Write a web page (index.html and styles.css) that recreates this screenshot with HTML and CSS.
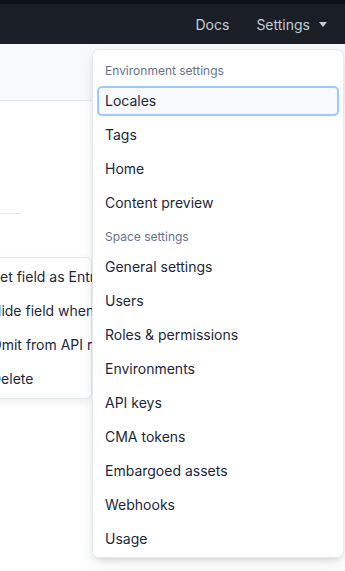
FILE: index.html
```html
<!DOCTYPE html>
<html lang="en">
<head>
  <meta charset="UTF-8">
  <meta name="viewport" content="width=device-width, initial-scale=1.0">
  <title>Settings</title>
  <link rel="stylesheet" href="styles.css">
</head>
<body>
  <div class="top-strip"></div>
  <header class="navbar">
    <nav class="nav-links">
      <a class="nav-link" href="#">Docs</a>
      <button class="nav-link nav-settings">
        Settings
        <svg class="caret" width="8" height="5" viewBox="0 0 8 5"><path d="M0 0h8L4 5z" fill="currentColor"/></svg>
      </button>
    </nav>
  </header>

  <main class="page">
    <div class="toolbar"></div>
    <div class="content">
      <div class="divider"></div>
    </div>

    <!-- field actions menu (behind the settings dropdown) -->
    <ul class="field-menu">
      <li>Set field as Entry title</li>
      <li>Hide field when editing</li>
      <li>Omit from API response</li>
      <li>Delete</li>
    </ul>
  </main>

  <div class="settings-menu">
    <div class="menu-header">Environment settings</div>
    <a class="menu-item is-focused" href="#">Locales</a>
    <a class="menu-item" href="#">Tags</a>
    <a class="menu-item" href="#">Home</a>
    <a class="menu-item" href="#">Content preview</a>
    <div class="menu-header">Space settings</div>
    <a class="menu-item" href="#">General settings</a>
    <a class="menu-item" href="#">Users</a>
    <a class="menu-item" href="#">Roles &amp; permissions</a>
    <a class="menu-item" href="#">Environments</a>
    <a class="menu-item" href="#">API keys</a>
    <a class="menu-item" href="#">CMA tokens</a>
    <a class="menu-item" href="#">Embargoed assets</a>
    <a class="menu-item" href="#">Webhooks</a>
    <a class="menu-item" href="#">Usage</a>
  </div>
</body>
</html>
```

FILE: styles.css
```css
body {
  margin: 0;
  font-family: Inter, 'Noto Sans', sans-serif;
  font-size: 14px;
  color: #1b273a;
  background-color: #fff;
  height: 571px;
  overflow: hidden;
  position: relative;
}

.top-strip {
  height: 4px;
  background-color: #0d1117;
}

.navbar {
  height: 40px;
  background-color: #1a1f27;
  display: flex;
  justify-content: flex-end;
  align-items: center;
  padding-right: 18px;
}

.nav-links {
  display: flex;
  align-items: center;
  gap: 27px;
}

.nav-link {
  color: #c5ccd3;
  text-decoration: none;
  font: inherit;
  background: none;
  border: none;
  padding: 0;
  cursor: pointer;
}

.nav-settings {
  display: flex;
  align-items: center;
  gap: 9px;
}

.caret {
  display: block;
  margin-top: 1px;
}

.page {
  position: relative;
}

.toolbar {
  height: 56px;
  background-color: #f7f9fa;
  border-bottom: 1px solid #e5ebed;
}

.content {
  padding-top: 112px;
}

.divider {
  width: 21px;
  height: 1px;
  background-color: #e5ebed;
}

.field-menu {
  position: absolute;
  top: 213px;
  left: -160px;
  width: 252px;
  box-sizing: border-box;
  margin: 0;
  padding: 2px 0;
  list-style: none;
  background-color: #fff;
  border: 1px solid #e5ebed;
  border-radius: 6px;
  box-shadow: 0 3px 8px rgba(25, 37, 50, 0.08);
}

.field-menu li {
  height: 34px;
  line-height: 34px;
  padding-left: 150px;
  white-space: nowrap;
}

.settings-menu {
  position: absolute;
  top: 49px;
  left: 92px;
  width: 252px;
  box-sizing: border-box;
  display: flex;
  flex-direction: column;
  padding: 4px 0 1px;
  background-color: #fff;
  border: 1px solid #e5ebed;
  border-radius: 7px;
  box-shadow: 0 6px 16px -2px rgba(25, 37, 50, 0.1), 0 3px 6px -3px rgba(25, 37, 50, 0.2);
}

.menu-header {
  height: 30px;
  box-sizing: border-box;
  padding: 9px 12px 0;
  font-size: 12px;
  line-height: 16px;
  color: #67728a;
}

.menu-item {
  display: block;
  height: 30px;
  margin: 2px 4px;
  padding: 0 8px;
  line-height: 30px;
  color: #1b273a;
  text-decoration: none;
  border-radius: 5px;
}

.menu-item.is-focused {
  background-color: #f7f9fa;
  box-shadow: inset 0 0 0 2px #98cbff;
}
```
